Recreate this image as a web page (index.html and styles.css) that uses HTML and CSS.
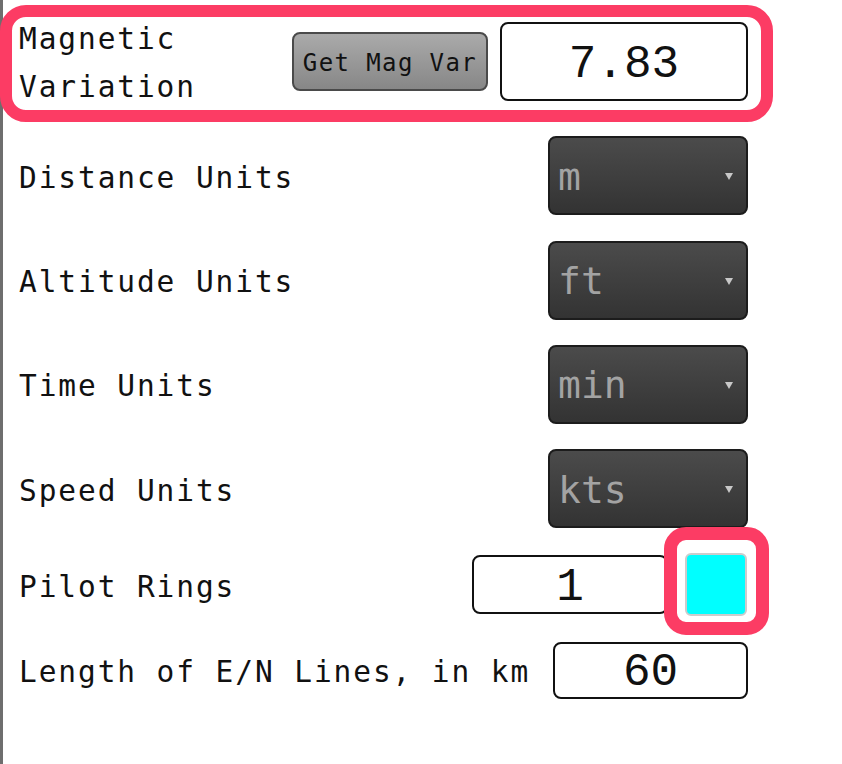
FILE: index.html
```html
<!DOCTYPE html>
<html lang="en">
<head>
    <meta charset="UTF-8">
    <meta name="viewport" content="width=device-width, initial-scale=1.0">
    <title>Settings</title>
    <link rel="stylesheet" href="styles.css">
</head>
<body>
    <div class="panel">
        <div class="row row-magvar">
            <span class="label label-wrap">Magnetic Variation</span>
            <button class="btn-magvar">Get Mag Var</button>
            <input type="text" class="value value-magvar" value="7.83">
        </div>

        <div class="row">
            <span class="label">Distance Units</span>
            <div class="select">
                <select><option>m</option><option>km</option><option>nm</option></select>
            </div>
        </div>

        <div class="row">
            <span class="label">Altitude Units</span>
            <div class="select">
                <select><option>ft</option><option>m</option></select>
            </div>
        </div>

        <div class="row">
            <span class="label">Time Units</span>
            <div class="select">
                <select><option>min</option><option>s</option></select>
            </div>
        </div>

        <div class="row">
            <span class="label">Speed Units</span>
            <div class="select">
                <select><option>kts</option><option>km/h</option></select>
            </div>
        </div>

        <div class="row row-rings">
            <span class="label">Pilot Rings</span>
            <div class="rings">
                <input type="text" class="value value-small" value="1">
                <span class="swatch"></span>
            </div>
        </div>

        <div class="row row-lines">
            <span class="label">Length of E/N Lines, in km</span>
            <input type="text" class="value value-small value-lines" value="60">
        </div>

        <!-- annotation marks -->
        <div class="mark mark-magvar"></div>
        <div class="mark mark-swatch"></div>
    </div>
</body>
</html>
```

FILE: styles.css
```css
body {
    margin: 0;
    background: #ffffff;
    font-family: "DejaVu Sans Mono", "Liberation Mono", monospace;
    color: #111;
}

.panel {
    position: relative;
    box-sizing: border-box;
    width: 748px;
    height: 100vh;
    padding: 22px 0 0 16px;
    border-left: 3px solid #6e6e6e;
    display: flex;
    flex-direction: column;
    gap: 25.3px;
}

.row {
    display: flex;
    align-items: center;
    justify-content: space-between;
    height: 79px;
}

.label {
    padding-top: 4px;
    font-size: 29.5px;
    letter-spacing: 1.9px;
    white-space: nowrap;
}

.label-wrap {
    flex: 1;
    white-space: normal;
    line-height: 48px;
    padding-top: 3px;
}

.row-magvar {
    margin-bottom: 10px;
}

.btn-magvar {
    width: 196px;
    height: 59px;
    margin-right: 12px;
    padding: 2px 0 0;
    font-family: inherit;
    font-size: 24px;
    letter-spacing: 1.4px;
    color: #111;
    background: linear-gradient(#aaaaaa, #878787);
    border: 2px solid #4a4a4a;
    border-radius: 8px;
}

.value {
    box-sizing: border-box;
    padding: 6px 0 0;
    font-family: "Liberation Mono", monospace;
    font-size: 46px;
    text-align: center;
    color: #111;
    background: #fff;
    border: 2px solid #111;
    border-radius: 8px;
    outline: none;
}

.value-magvar {
    width: 248px;
    height: 79px;
}

.value-small {
    width: 196px;
    height: 59px;
}

.value-lines {
    width: 195px;
    height: 57px;
}

.select {
    position: relative;
    width: 200px;
    height: 79px;
}

.select select {
    appearance: none;
    -webkit-appearance: none;
    box-sizing: border-box;
    width: 100%;
    height: 100%;
    padding: 2px 0 0 8px;
    font-family: "DejaVu Sans Mono", monospace;
    font-size: 38px;
    color: #a3a3a3;
    background: linear-gradient(#4b4b4b, #333333);
    border: 2px solid #1c1c1c;
    border-radius: 8px;
    outline: none;
}

.select::after {
    content: "";
    position: absolute;
    right: 15px;
    top: 37px;
    border-left: 4px solid transparent;
    border-right: 4px solid transparent;
    border-top: 7px solid #c8c8c8;
}

.row-rings {
    height: 63px;
}

.row-lines {
    height: 57px;
}

.rings {
    display: flex;
    align-items: center;
    gap: 17px;
    margin-right: 1px;
}

.swatch {
    box-sizing: border-box;
    width: 62px;
    height: 63px;
    background: #00ffff;
    border: 2px solid #cccccc;
    border-radius: 6px;
}

.mark {
    position: absolute;
    box-sizing: border-box;
    border-style: solid;
    border-color: #fc3c64;
    pointer-events: none;
}

.mark-magvar {
    left: -3px;
    top: 5px;
    width: 773px;
    height: 117px;
    border-width: 12px;
    border-radius: 26px;
}

.mark-swatch {
    left: 661px;
    top: 527px;
    width: 105px;
    height: 108px;
    border-width: 13px;
    border-radius: 22px;
}
```
